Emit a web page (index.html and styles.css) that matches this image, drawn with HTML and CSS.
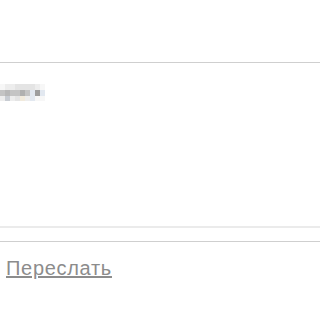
FILE: index.html
```html
<!DOCTYPE html>
<html>
	<head>
		<meta charset="UTF-8"/>
		<title>Письмо</title>
<link rel="stylesheet" href="styles.css">
	</head>
	<body>
		<div class="top"></div>

		<div class="message">
			<div class="blur">
				<i class="c0"></i><i class="c1"></i><i class="c1"></i><i class="c2"></i><i class="c2"></i><i class="c2"></i><i class="c2"></i><i class="c1"></i><i class="c0"></i>
				<i class="c3"></i><i class="c4"></i><i class="c3"></i><i class="c3"></i><i class="c5"></i><i class="c3"></i><i class="c6"></i><i class="c7"></i><i class="c6"></i>
				<i class="c1"></i><i class="c8"></i><i class="c1"></i><i class="c2"></i><i class="c9"></i><i class="c1"></i><i class="c6"></i><i class="c0"></i><i class="c0"></i>
			</div>
		</div>

		<div class="spacer"></div>

		<div class="actions">
			<a href="#" class="forward">Переслать</a>
		</div>
	</body>
</html>
```

FILE: styles.css
```css
body {
	margin: 0;
	padding: 0;
	background: #fff;
	font-family: "Liberation Sans", Arial, sans-serif;
}

.top {
	height: 62px;
	border-bottom: 1px solid #cfcfcf;
}

.message {
	height: 165px;
	border-bottom: 2px solid #ebebeb;
	padding-top: 21px;
	box-sizing: border-box;
}

.blur {
	display: grid;
	grid-template-columns: repeat(9, 5px);
	grid-template-rows: 6px 6px 5px;
}

.blur i { display: block; }
.c0 { background: #f7f7f7; }
.c1 { background: #ededed; }
.c2 { background: #e4e4e4; }
.c3 { background: #c4c4c4; }
.c4 { background: #b8b8b8; }
.c5 { background: #b0b0b0; }
.c6 { background: #e2e8f0; }
.c7 { background: #9e9e9e; }
.c8 { background: #c8ccd2; }
.c9 { background: #f1eadc; }

.spacer {
	height: 13px;
	border-bottom: 1px solid #cfcfcf;
}

.actions {
	padding: 15px 6px;
}

.forward {
	color: #8c8c8c;
	font-size: 20px;
	letter-spacing: 0.7px;
	text-decoration: underline;
}
```
